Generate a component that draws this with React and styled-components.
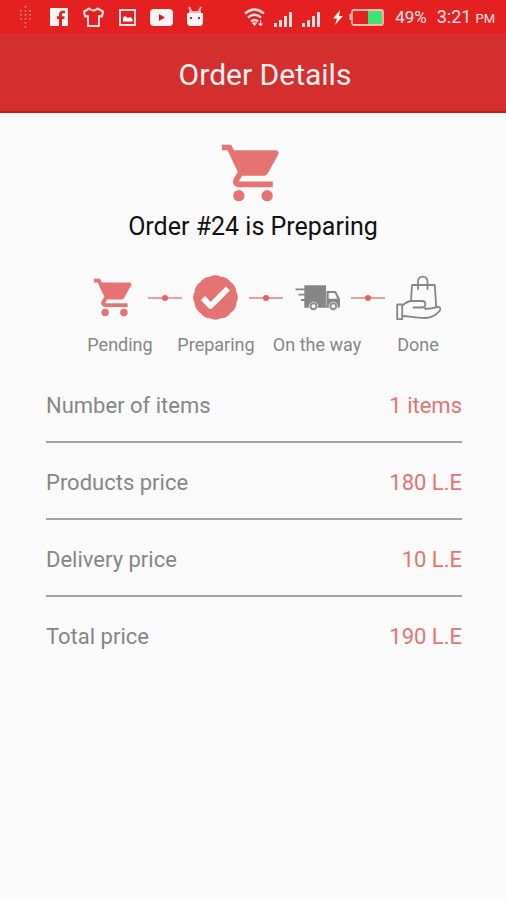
import React from "react";
import styled, { createGlobalStyle } from "styled-components";
import { IoLogoFacebook } from "react-icons/io";

const GlobalStyle = createGlobalStyle`
  * {
    box-sizing: border-box;
  }

  body {
    margin: 0;
    background: #fafafa;
    font-family: Roboto, "Liberation Sans", sans-serif;
  }
`;

const StatusBar = styled.div`
  display: flex;
  justify-content: space-between;
  align-items: center;
  height: 34px;
  padding: 0 11px 0 13px;
  background: #e52020;
  color: #ffe4e4;
`;

const StatusGroup = styled.div`
  display: flex;
  align-items: center;
  gap: ${props => props.gap}px;
`;

const StatusIcon = styled.svg`
  display: block;
  width: ${props => props.w}px;
  height: 24px;
  fill: none;
  stroke: none;
`;

const FacebookIcon = styled(IoLogoFacebook)`
  display: block;
  width: 24px;
  height: 26px;
  color: #fff4f4;
`;

const StatusText = styled.span`
  font-size: ${props => props.size}px;
  line-height: 24px;
`;

const Readings = styled.div`
  display: flex;
  align-items: baseline;
  gap: 10px;
  padding-top: 2px;
`;

const Clock = styled.time`
  display: flex;
  align-items: baseline;
  gap: 4px;
`;

const Header = styled.header`
  display: flex;
  justify-content: center;
  align-items: center;
  height: 79px;
  padding: 4px 0 0 24px;
  background: #d32f2f;
  border-bottom: 2px solid #c41c1c;
`;

const Title = styled.h1`
  margin: 0;
  color: #fff0f0;
  font-size: 30px;
  font-weight: 400;
  line-height: 40px;
`;

const Hero = styled.section`
  display: flex;
  flex-direction: column;
  align-items: center;
  padding-top: 26px;
`;

const CartSvg = styled.svg`
  display: block;
  width: ${props => props.size}px;
  height: ${props => props.size}px;
  fill: #e57373;
`;

const Status = styled.h2`
  margin: 5px 0 0;
  color: #111;
  font-size: 25px;
  font-weight: 400;
  line-height: 30px;
`;

const Track = styled.div`
  display: flex;
  justify-content: space-between;
  align-items: center;
  padding: 33px 65px 0 92px;
`;

const StepSvg = styled.svg`
  display: block;
  width: 45px;
  height: 45px;
`;

const Connector = styled.div`
  display: flex;
  justify-content: center;
  align-items: center;
  width: 34px;
  height: 2px;
  background: #ee9c9c;

  &:before {
    content: "";
    width: 6px;
    height: 6px;
    flex: none;
    border-radius: 50%;
    background: #e06464;
  }
`;

const Labels = styled.ol`
  display: grid;
  grid-template-columns: 96fr 96fr 106fr 96fr;
  margin: 0;
  padding: 13px 40px 0 72px;
  list-style: none;
`;

const Label = styled.li`
  color: #868686;
  font-size: 18px;
  line-height: 24px;
  text-align: center;
`;

const Summary = styled.dl`
  margin: 9px 44px 0 46px;
`;

const Row = styled.div`
  display: flex;
  justify-content: space-between;
  align-items: center;
  height: 77px;
  padding-top: 4px;
  border-bottom: 2px solid #a2a2a2;

  &:last-child {
    border-bottom-color: transparent;
  }
`;

const Name = styled.dt`
  color: #868686;
  font-size: 22px;
  line-height: 28px;
`;

const Value = styled.dd`
  margin: 0;
  color: #e57373;
  font-size: 22px;
  line-height: 28px;
`;

const rows = [
  { name: "Number of items", value: "1 items" },
  { name: "Products price", value: "180 L.E" },
  { name: "Delivery price", value: "10 L.E" },
  { name: "Total price", value: "190 L.E" }
];

const Cart = ({ size }) => (
  <CartSvg size={size} viewBox="0 0 24 24" aria-hidden="true">
    <path d="M1 2v2h2l3.6 7.6-1.4 2.4c-.8 1.400.2 3 1.800 3h12v-2H7.400c-.2 0-.3-.2-.2-.4l.9-1.600h7.500c.7 0 1.400-.4 1.700-1l3.600-6.500c.4-.7-.1-1.500-.9-1.500H5.200l-.9-2z" />
    <circle cx="7" cy="20" r="2" />
    <circle cx="17" cy="20" r="2" />
  </CartSvg>
);

// scalloped edge: one arc per lobe around the circle
const scallop = (lobes, cx, cy, r) => {
  const points = Array.from({ length: lobes }, (_, i) => {
    const a = (Math.PI * 2 * (i + 0.5)) / lobes;
    return `${(cx + r * Math.cos(a)).toFixed(2)} ${(cy + r * Math.sin(a)).toFixed(2)}`;
  });
  return `M${points[lobes - 1]}` + points.map(p => `A12 12 0 0 1 ${p}`).join("") + "Z";
};

const Verified = () => (
  <StepSvg viewBox="0 0 45 45" aria-hidden="true">
    <path d={scallop(12, 22.5, 22.5, 21.6)} fill="#e57373" />
    <path
      d="M10 23 17.5 31 35 13.5"
      fill="none"
      stroke="#fafafa"
      strokeWidth="5.8"
      strokeLinejoin="round"
    />
  </StepSvg>
);

const Truck = () => (
  <StepSvg viewBox="0 0 45 45" aria-hidden="true">
    <path
      d="M9.3 10.3H31V16h8.5c1 0 1.600.5 2 1.300l3 5.700c.3.6.5 1.200.5 1.800v6.500c0 .9-.6 1.400-1.400 1.400H9.300z"
      fill="#868686"
    />
    <path d="M33.7 18H39c.5 0 .8.2 1 .6l2.300 5.100h-8.600z" fill="#fafafa" />
    <path d="M31.3 16v15" stroke="#fafafa" strokeWidth="0.5" />
    <path d="M.5 14.3H10M3.5 19.7H10M6 25h4" stroke="#868686" strokeWidth="1.8" />
    <g fill="#868686" stroke="#fafafa" strokeWidth="0.7">
      <circle cx="18.5" cy="31.3" r="4.2" />
      <circle cx="38.3" cy="31.3" r="4.2" />
    </g>
    <g fill="#fafafa">
      <circle cx="18.5" cy="31.3" r="2" />
      <circle cx="38.3" cy="31.3" r="2" />
    </g>
  </StepSvg>
);

const Delivered = () => (
  <StepSvg
    viewBox="0 0 45 45"
    fill="none"
    stroke="#868686"
    strokeWidth="1.8"
    strokeLinecap="round"
    strokeLinejoin="round"
    aria-hidden="true"
  >
    <path d="M1.2 29.5h5v14.7h-5z" />
    <path d="M15 25.5 16 10h22.8l1.4 22" />
    <path d="M22 14V6.3a4.7 4.7 0 0 1 9.500 0V14" />
    <path d="M6.5 30.5c3-2.500 5-4.500 9-4.500H26c4.500 0 4.500 6.500 0 6.500h-8.500" />
    <path d="M29 33.5c4.500 1 8.500-.7 12.500-1.500 3-.5 3.500 2 2 4-4 5-9 7-15 7-8 0-14-1.500-22-2" />
  </StepSvg>
);

const Signal = () => (
  <StatusIcon w="19" viewBox="0 0 19 24" aria-hidden="true">
    <path d="M0 18h3v4H0zM5 15h3v7H5zM10 11h3v11h-3zM15 7h3v15h-3z" fill="#ffdede" />
  </StatusIcon>
);

const Notifications = () => (
  <StatusGroup gap={10}>
    <StatusIcon w="24" viewBox="0 0 24 24" aria-hidden="true">
      <path
        d="M12.5 1v22M8 5v10M17 5v10"
        stroke="#f79a8a"
        strokeWidth="1.5"
        strokeDasharray="1.5 2.5"
      />
    </StatusIcon>
    <FacebookIcon aria-hidden="true" />
    <StatusIcon w="24" viewBox="0 0 24 24" aria-hidden="true">
      <path
        d="M8.5 3.5 3 6.5l1 5 3-.5v10h11V11l3 .5 1-5-5.500-3c-2.500 2.500-6 2.500-8 0z"
        stroke="#ffdede"
        strokeWidth="2"
        strokeLinejoin="round"
      />
    </StatusIcon>
    <StatusIcon w="24" viewBox="0 0 24 24" aria-hidden="true">
      <rect x="5" y="5" width="15" height="15" stroke="#ffdede" strokeWidth="2" />
      <path d="M8 16.5v-4l2-1.500 3 2 2-1 2.500 2v2.500z" fill="#fff" />
    </StatusIcon>
    <StatusIcon w="24" viewBox="0 0 24 24" aria-hidden="true">
      <rect x="1" y="4" width="23" height="17" rx="4" fill="#fff4f4" />
      <path d="m10 9 6 3.500-6 3.500z" fill="#d32020" />
    </StatusIcon>
    <StatusIcon w="24" viewBox="0 0 24 24" aria-hidden="true">
      <path d="M4 8h16v9q0 4-4 4H8q-4 0-4-4z" fill="#fff4f4" />
      <path d="m6 2 2.500 5M18 2l-2.500 5M6 7h12" stroke="#ffb8b8" strokeWidth="2" />
      <path d="M7 12h2v2H7zM15 12h2v2h-2z" fill="#e52020" />
    </StatusIcon>
  </StatusGroup>
);

const System = () => (
  <StatusGroup gap={11}>
    <StatusGroup gap={9}>
      <StatusIcon w="21" viewBox="0 0 21 24" aria-hidden="true">
        <path
          d="M1 8.5q9.500-8 19 0M4 12.500q6.500-5.500 13 0M7 16.500q3.500-3 7 0"
          stroke="#ffdede"
          strokeWidth="2.4"
        />
        <path d="m8 18 2.500-1 2.500 1-2.500 3z" fill="#ffdede" />
        <path d="M16.5 15v5M14.500 18.500l2 2 2-2" stroke="#ffdede" strokeWidth="1.2" />
      </StatusIcon>
      <Signal />
      <Signal />
    </StatusGroup>
    <StatusGroup gap={5}>
      <StatusIcon w="12" viewBox="0 0 12 24" aria-hidden="true">
        <path d="M8 5 1 13.500h4L3 20l8-9H7z" fill="#fff4f4" />
      </StatusIcon>
      <StatusIcon w="35" viewBox="0 0 35 24" aria-hidden="true">
        <rect x="3" y="5" width="31" height="15" rx="2" stroke="#ffb8b0" strokeWidth="1.8" />
        <path d="M1.500 9v6" stroke="#ffb8b0" strokeWidth="2" />
        <path d="M19 6h14v13H19z" fill="#3be56f" />
      </StatusIcon>
    </StatusGroup>
    <Readings>
      <StatusText size={17}>49%</StatusText>
      <Clock dateTime="15:21">
        <StatusText size={18}>3:21</StatusText>
        <StatusText size={13}>PM</StatusText>
      </Clock>
    </Readings>
  </StatusGroup>
);

const App = () => (
  <>
    <GlobalStyle />
    <StatusBar>
      <Notifications />
      <System />
    </StatusBar>
    <Header>
      <Title>Order Details</Title>
    </Header>
    <main>
      <Hero>
        <Cart size={68} />
        <Status>Order #24 is Preparing</Status>
      </Hero>
      <Track>
        <Cart size={45} />
        <Connector />
        <Verified />
        <Connector />
        <Truck />
        <Connector />
        <Delivered />
      </Track>
      <Labels>
        <Label>Pending</Label>
        <Label>Preparing</Label>
        <Label>On the way</Label>
        <Label>Done</Label>
      </Labels>
      <Summary>
        {rows.map(row => (
          <Row key={row.name}>
            <Name>{row.name}</Name>
            <Value>{row.value}</Value>
          </Row>
        ))}
      </Summary>
    </main>
  </>
);

export default App;
